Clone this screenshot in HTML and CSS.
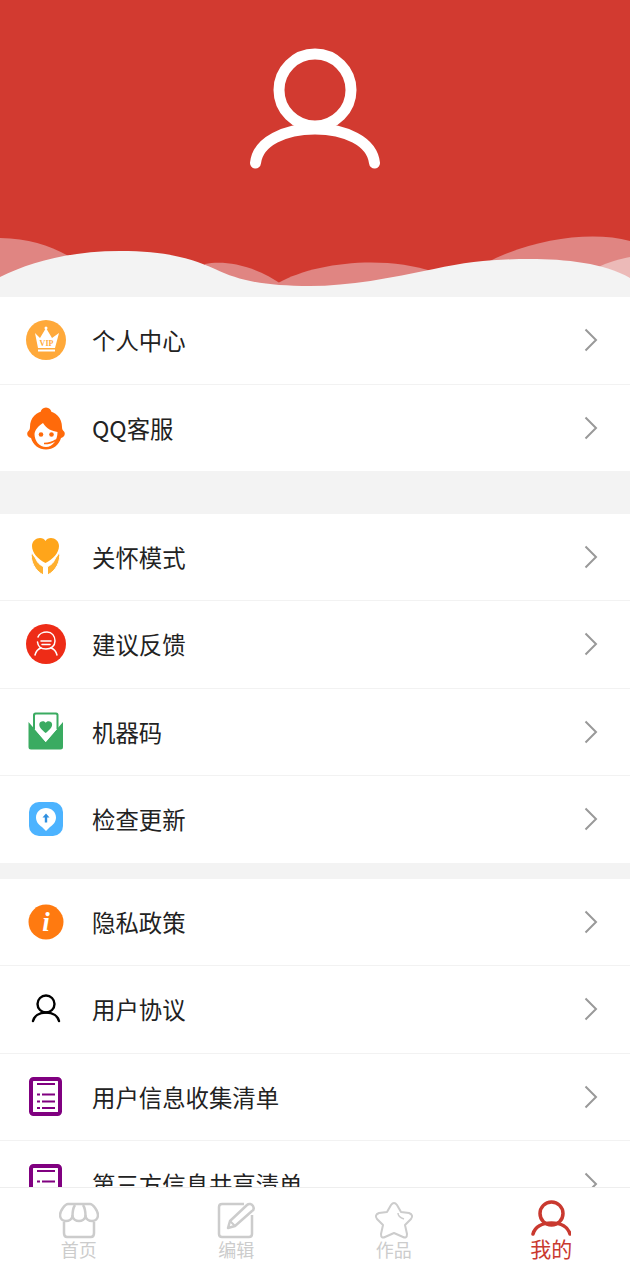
FILE: index.html
```html
<!DOCTYPE html>
<html lang="zh-CN">
<head>
<meta charset="utf-8">
<title>我的</title>
<link rel="stylesheet" href="styles.css">
</head>
<body>
<div class="app">
  <main class="content">
    <header class="hero">
      <svg class="hero-art" viewBox="0 0 630 297" width="630" height="297">
        <rect width="630" height="297" fill="#d23a30"/>
        <path d="M0 238C30 239 50 245 72 258V290H0Z" fill="#e08582"/>
        <path d="M205 264C225 260 255 265 284 286H205Z" fill="#e08582"/>
        <path d="M278 283C315 262 385 255 434 272V295H278Z" fill="#e08582"/>
        <path d="M488 262C530 240 590 230 630 241V290H488Z" fill="#e08582"/>
        <path d="M596 268C608 262 620 259 630 257V290H596Z" fill="#ecbab8"/>
        <path d="M0 277C30 262 70 251 120 251C165 251 190 258 215 269C240 281 265 286 310 286C350 286 390 278 434 269C470 261 500 259 530 259C565 259 605 263 630 278V297H0Z" fill="#f3f3f3"/>
      </svg>
      <svg class="hero-user" viewBox="0 0 140 130" width="140" height="130">
        <circle cx="70" cy="47" r="36" fill="none" stroke="#fff" stroke-width="11"/>
        <path d="M10.500 120C13 98 40 86 70 86C100 86 127 98 129.500 120" fill="none" stroke="#fff" stroke-width="11" stroke-linecap="round"/>
      </svg>
    </header>

    <section class="group">
      <div class="row">
        <svg class="icon" viewBox="0 0 46 46"><circle cx="23" cy="23" r="20" fill="#ffa93a"/><path d="M12 16L17 21L23 11L29 21L36 16L32 31H15Z" fill="#fff"/><circle cx="23" cy="11" r="1.500" fill="#fff"/><rect x="15" y="32.500" width="17" height="2" fill="#fff"/><text class="vip" x="23.500" y="29" text-anchor="middle">VIP</text></svg>
        <span class="label">个人中心</span>
        <svg class="chevron" viewBox="0 0 14 24"><path d="M1.500 1.500L12 12L1.500 22.500"/></svg>
      </div>
      <div class="row">
        <svg class="icon" viewBox="0 0 46 46"><circle cx="23" cy="8" r="5.500" fill="#ff6a0a"/><path d="M23 6C33 6 39 13 39 22C39 24 39.500 25 41 26.500C42.500 28 42 32 38 33C36 40 30 44.500 23 44.500C16 44.500 10 40 8 33C4 32 3.500 28 5 26.500C6.500 25 7 24 7 22C7 13 13 6 23 6Z" fill="#ff6a0a"/><path d="M11.500 29C12 25 15 21 20 18C23.500 24 29 26 34.500 27C34.500 35 30 42 23 42C16.500 42 11.500 36 11.500 29Z" fill="#fff"/><circle cx="18" cy="29.500" r="2.300" fill="#ff6a0a"/><circle cx="28.500" cy="29.500" r="2.300" fill="#ff6a0a"/><path d="M21 38.500C25 38.500 29 38 33 35" fill="none" stroke="#ff6a0a" stroke-width="1.600"/></svg>
        <span class="label">QQ客服</span>
        <svg class="chevron" viewBox="0 0 14 24"><path d="M1.500 1.500L12 12L1.500 22.500"/></svg>
      </div>
    </section>

    <div class="spacer spacer-lg"></div>

    <section class="group">
      <div class="row">
        <svg class="icon" viewBox="0 0 46 46"><path d="M22.500 29C15 25 9 19 9 12C9 7 13 4 17 4C19.500 4 21.500 5 22.500 7C23.500 5 25.500 4 28 4C32 4 36 7 36 12C36 19 30 25 22.500 29Z" fill="#ffa51a"/><g fill="#ffb030" stroke="#fff" stroke-width="1"><path d="M8.500 18C7 27 12 37 20.500 41V33C18 31 15 30 13 25C12 23 10 21 8.500 18Z"/><path d="M36.500 18C38 27 33 37 24.500 41V33C27 31 30 30 32 25C33 23 35 21 36.500 18Z"/></g></svg>
        <span class="label">关怀模式</span>
        <svg class="chevron" viewBox="0 0 14 24"><path d="M1.500 1.500L12 12L1.500 22.500"/></svg>
      </div>
      <div class="row">
        <svg class="icon" viewBox="0 0 46 46"><circle cx="23" cy="23" r="20" fill="#ee2c17"/><g fill="none" stroke="#fff" stroke-width="1.500" stroke-linecap="round"><path d="M15 16C16 13 20 11 24 11C29 11 32 15 32 20C32 25 28 28 23 28C19 28 15 26 14.500 21"/><path d="M18 20H28M19 23.500H27"/><path d="M12 34C13 30 15 28 18 27M34 34C33 30 31 28 28 27"/></g></svg>
        <span class="label">建议反馈</span>
        <svg class="chevron" viewBox="0 0 14 24"><path d="M1.500 1.500L12 12L1.500 22.500"/></svg>
      </div>
      <div class="row">
        <svg class="icon" viewBox="0 0 46 46"><path d="M5.500 13L22.700 33L40 13V38Q40 40.500 37.500 40.500H8Q5.500 40.500 5.500 38Z" fill="#3aab61"/><path d="M10 6Q10 3.500 12.500 3.500H33Q35.500 3.500 35.500 6V20H10Z" fill="#3aab61"/><path d="M12 6.500Q12 5.500 13 5.500H32.500Q33.500 5.500 33.500 6.500V20.500L22.700 33L12 20.500Z" fill="#fff"/><path d="M22.700 24C19 21 16.300 18.800 16.300 15.500C16.300 13.300 18.200 12.300 19.800 12.300C21.200 12.300 22.200 13 22.700 13.800C23.200 13 24.200 12.300 25.600 12.300C27.200 12.300 29.100 13.300 29.100 15.500C29.100 18.800 26.400 21 22.700 24Z" fill="#3aab61"/></svg>
        <span class="label">机器码</span>
        <svg class="chevron" viewBox="0 0 14 24"><path d="M1.500 1.500L12 12L1.500 22.500"/></svg>
      </div>
      <div class="row">
        <svg class="icon" viewBox="0 0 46 46"><rect x="6" y="6" width="34" height="34" rx="10" fill="#4cb3ff"/><path d="M23 12C28.500 12 33 16 33 21.500C33 26 30 29 27 31L23 35L19 31C16 29 13 26 13 21.500C13 16 17.500 12 23 12Z" fill="#fff"/><path d="M23 17.500L26.500 21.500H24.200V26.500H21.800V21.500H19.500Z" fill="#2f8fe0"/></svg>
        <span class="label">检查更新</span>
        <svg class="chevron" viewBox="0 0 14 24"><path d="M1.500 1.500L12 12L1.500 22.500"/></svg>
      </div>
    </section>

    <div class="spacer spacer-sm"></div>

    <section class="group">
      <div class="row">
        <svg class="icon" viewBox="0 0 46 46"><circle cx="23" cy="23" r="17.500" fill="#ff7a10"/><text class="info" x="23" y="32" text-anchor="middle">i</text></svg>
        <span class="label">隐私政策</span>
        <svg class="chevron" viewBox="0 0 14 24"><path d="M1.500 1.500L12 12L1.500 22.500"/></svg>
      </div>
      <div class="row">
        <svg class="icon" viewBox="0 0 46 46"><g fill="none" stroke="#000" stroke-width="2.400" stroke-linecap="round"><circle cx="23" cy="18" r="8.500"/><path d="M10 35C11 30 16 26.500 23 26.500C30 26.500 35 30 36 35"/></g></svg>
        <span class="label">用户协议</span>
        <svg class="chevron" viewBox="0 0 14 24"><path d="M1.500 1.500L12 12L1.500 22.500"/></svg>
      </div>
      <div class="row">
        <svg class="icon" viewBox="0 0 46 46"><use href="#doc"/></svg>
        <span class="label">用户信息收集清单</span>
        <svg class="chevron" viewBox="0 0 14 24"><path d="M1.500 1.500L12 12L1.500 22.500"/></svg>
      </div>
      <div class="row">
        <svg class="icon" viewBox="0 0 46 46"><g id="doc"><rect x="8" y="5" width="29" height="35" rx="2.500" fill="none" stroke="#800080" stroke-width="4"/><path d="M14 10H32M19 20.500H32M19 27.500H32M19 34H32M14 20.500H17M14 27.500H17M14 34H17" stroke="#800080" stroke-width="2" fill="none"/></g></svg>
        <span class="label">第三方信息共享清单</span>
        <svg class="chevron" viewBox="0 0 14 24"><path d="M1.500 1.500L12 12L1.500 22.500"/></svg>
      </div>
    </section>
  </main>

  <nav class="tabbar">
    <div class="tab">
      <svg class="tab-icon" viewBox="0 0 40 40"><g fill="none" stroke="#ccc" stroke-width="2.500" stroke-linejoin="round"><path d="M9 4H31C34 4 39 11 39 15C39 19 36 21 33 21C30 21 27 19 26.500 16C26 19 23 21 20 21C17 21 14 19 13.500 16C13 19 10 21 7 21C4 21 1 19 1 15C1 11 6 4 9 4Z"/><path d="M13.500 16C13.500 12 14 8 16 5M26.500 16C26.500 12 26 8 24 5"/><path d="M5 22V33C5 35.500 6 37 8 37H32C34 37 35 35.500 35 33V22"/></g></svg>
      <span class="tab-label">首页</span>
    </div>
    <div class="tab">
      <svg class="tab-icon" viewBox="0 0 40 40"><g fill="none" stroke="#ccc" stroke-width="2.500"><path d="M28 4H6C4 4 3 5 3 7V34C3 36 4 37 6 37H33C35 37 36 36 36 34V15"/><path d="M12 28L14 21L31 5C33 3 36 4 37 6C38 8 38 10 36 11L19 26Z" stroke-linejoin="round"/><path d="M14 21L19 26" stroke-width="2"/></g></svg>
      <span class="tab-label">编辑</span>
    </div>
    <div class="tab">
      <svg class="tab-icon" viewBox="0 0 40 40"><g fill="none" stroke="#ccc" stroke-width="2" stroke-linejoin="round"><path d="M17 5Q20 1 23 5L27 12L35 13Q40 15 37 19L31 25L33 34Q33 39 29 37L20 33L11 37Q7 39 7 34L9 25L3 19Q0 15 5 13L13 12Z"/><path d="M24 13Q24 17 30 19" stroke-width="1.500"/></g></svg>
      <span class="tab-label">作品</span>
    </div>
    <div class="tab tab-active">
      <svg class="tab-icon" viewBox="0 0 40 40"><g fill="none" stroke="#c9392f" stroke-width="3.500" stroke-linecap="round"><circle cx="20.500" cy="13.500" r="11.500"/><path d="M2 34C4 27 11 23 20.500 23C30 23 37 27 39 34"/></g></svg>
      <span class="tab-label">我的</span>
    </div>
  </nav>
</div>
</body>
</html>
```

FILE: styles.css
```css
* {
  box-sizing: border-box;
}

html,
body {
  margin: 0;
  padding: 0;
  background: #f3f3f3;
}

.app {
  display: flex;
  flex-direction: column;
  width: 630px;
  height: 1280px;
  overflow: hidden;
  font-family: "Noto Sans CJK SC", "Noto Sans", sans-serif;
}

.content {
  flex: 1;
  min-height: 0;
  overflow: hidden;
}

.hero {
  position: relative;
  height: 297px;
}

.hero-art {
  display: block;
}

.hero-user {
  position: absolute;
  left: 245px;
  top: 43px;
}

.group {
  background: #fff;
}

.row {
  display: flex;
  align-items: center;
  height: 87.5px;
  padding: 0 32px 0 23px;
  border-bottom: 1px solid #f2f2f2;
}

.row:last-child {
  height: 86.5px;
  border-bottom: 0;
}

.icon {
  flex: none;
  width: 46px;
  height: 46px;
  margin-right: 23px;
}

.label {
  flex: 1;
  font-size: 23.4px;
  line-height: 32px;
  color: #222;
}

.chevron {
  flex: none;
  width: 14px;
  height: 24px;
  fill: none;
  stroke: #999;
  stroke-width: 2;
}

.vip {
  font-family: "Liberation Serif", serif;
  font-size: 8px;
  font-weight: 700;
  fill: #ffa93a;
}

.info {
  font-family: "Liberation Serif", serif;
  font-size: 27px;
  font-weight: 700;
  font-style: italic;
  fill: #fff;
}

.spacer-lg {
  height: 42.5px;
}

.spacer-sm {
  height: 16px;
}

.tabbar {
  flex: none;
  display: flex;
  height: 93px;
  padding-top: 12px;
  background: #fff;
  border-top: 1px solid #eee;
}

.tab {
  flex: 1;
  display: flex;
  flex-direction: column;
  align-items: center;
}

.tab-icon {
  display: block;
  width: 40px;
  height: 40px;
}

.tab-label {
  margin-top: -1px;
  font-size: 18px;
  line-height: 20px;
  color: #ccc;
}

.tab-active .tab-label {
  margin-top: -2px;
  font-size: 21px;
  color: #c9392f;
}
```
